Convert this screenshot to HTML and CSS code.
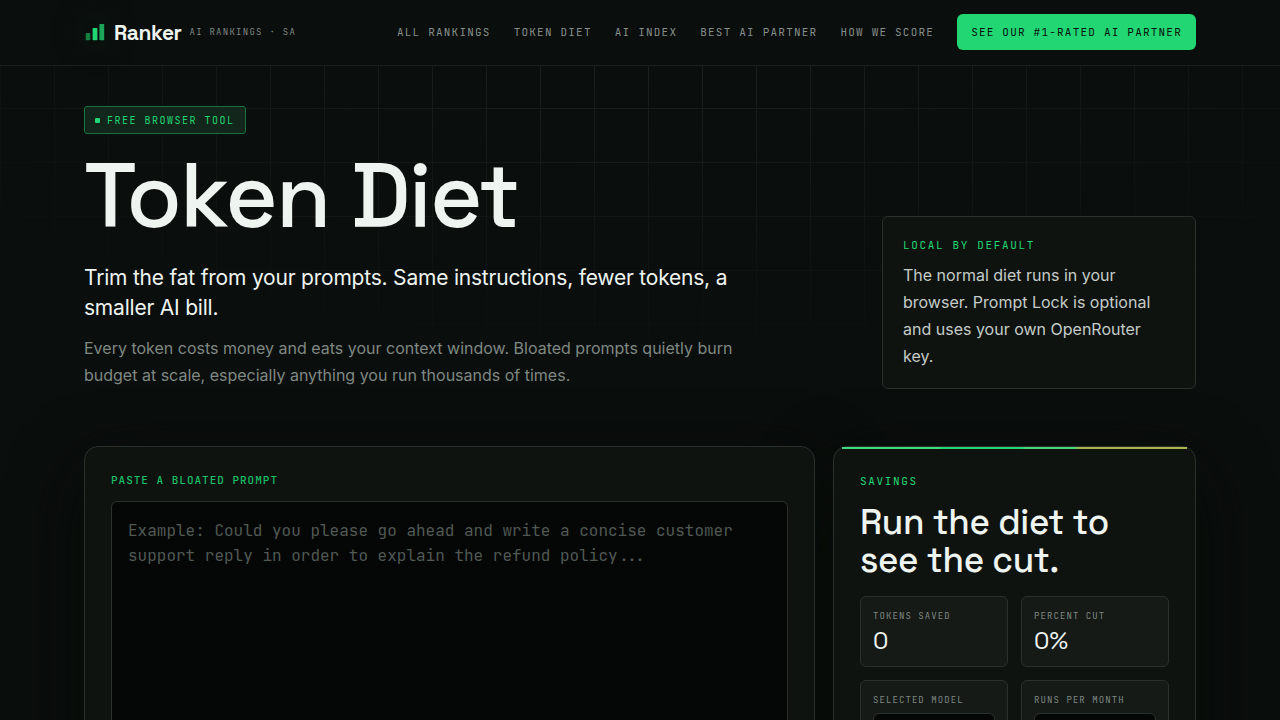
FILE: index.html
```html
<!DOCTYPE html>
<html lang="en">
<head>
    <meta charset="UTF-8">
    <meta name="viewport" content="width=device-width, initial-scale=1.0">
    <title>Token Diet | Ranker</title>
    <link rel="stylesheet" href="styles.css">
</head>
<body>
    <header class="site-header">
        <div class="wrap header-inner">
            <a class="brand" href="#">
                <svg class="brand-mark" width="22" height="22" viewBox="0 0 22 22" aria-hidden="true">
                    <rect x="1.7" y="12" width="4.6" height="7.3" rx="0.8" fill="#15803f"/>
                    <rect x="8.6" y="7" width="4.8" height="12.3" rx="0.8" fill="#22d673"/>
                    <rect x="15.4" y="3" width="4.8" height="16.3" rx="0.8" fill="#1ba65a"/>
                </svg>
                <span class="brand-name">Ranker</span>
                <span class="brand-sub">AI RANKINGS · SA</span>
            </a>
            <nav class="nav">
                <a href="#">ALL RANKINGS</a>
                <a href="#">TOKEN DIET</a>
                <a href="#">AI INDEX</a>
                <a href="#">BEST AI PARTNER</a>
                <a href="#">HOW WE SCORE</a>
                <a class="nav-cta" href="#">SEE OUR #1-RATED AI PARTNER</a>
            </nav>
        </div>
    </header>

    <main class="wrap">
        <section class="hero">
            <div class="hero-copy">
                <span class="badge">FREE BROWSER TOOL</span>
                <h1>Token Diet</h1>
                <p class="lead">Trim the fat from your prompts. Same instructions, fewer tokens, a smaller AI bill.</p>
                <p class="sub">Every token costs money and eats your context window. Bloated prompts quietly burn budget at scale, especially anything you run thousands of times.</p>
            </div>
            <aside class="note">
                <span class="eyebrow">LOCAL BY DEFAULT</span>
                <p>The normal diet runs in your browser. Prompt Lock is optional and uses your own OpenRouter key.</p>
            </aside>
        </section>

        <section class="tool">
            <div class="panel">
                <label class="prompt-label" for="prompt">PASTE A BLOATED PROMPT</label>
                <textarea id="prompt" class="prompt" placeholder="Example: Could you please go ahead and write a concise customer support reply in order to explain the refund policy..."></textarea>
            </div>
            <div class="panel savings">
                <span class="eyebrow">SAVINGS</span>
                <h2>Run the diet to see the cut.</h2>
                <div class="stats">
                    <div class="stat">
                        <span class="stat-label">TOKENS SAVED</span>
                        <span class="stat-value">0</span>
                    </div>
                    <div class="stat">
                        <span class="stat-label">PERCENT CUT</span>
                        <span class="stat-value">0%</span>
                    </div>
                    <div class="stat">
                        <label class="stat-label" for="model">SELECTED MODEL</label>
                        <select id="model" class="field"></select>
                    </div>
                    <div class="stat">
                        <label class="stat-label" for="runs">RUNS PER MONTH</label>
                        <input id="runs" class="field" type="number">
                    </div>
                </div>
            </div>
        </section>
    </main>
</body>
</html>
```

FILE: styles.css
```css
:root {
    --bg: #0a0e0d;
    --panel: #0e1310;
    --card: #151a17;
    --line: #2a312d;
    --text: #eef4f0;
    --muted: #7f8882;
    --green: #22d673;
    --display: "Space Grotesk", Inter, sans-serif;
    --sans: Inter, "Liberation Sans", sans-serif;
    --mono: "JetBrains Mono", "DejaVu Sans Mono", monospace;
}
* {
    box-sizing: border-box;
}
body {
    margin: 0;
    position: relative;
    background: var(--bg);
    color: var(--text);
    font-family: var(--sans);
}
/* faint grid that fades out down the page */
body::before {
    content: "";
    position: absolute;
    inset: 0 0 auto;
    height: 380px;
    z-index: -1;
    background-image:
        linear-gradient(#1a201d 1px, transparent 1px),
        linear-gradient(90deg, #1a201d 1px, transparent 1px);
    background-size: 54px 54px;
    mask-image: radial-gradient(ellipse 70% 100% at 50% 0, #000 20%, transparent 100%);
}
h1, h2, p {
    margin: 0;
}
a {
    color: inherit;
    text-decoration: none;
}
.wrap {
    max-width: 1160px;
    margin: 0 auto;
    padding: 0 24px;
}

/* header */
.site-header {
    padding-bottom: 1px;
    background: #0a0e0d;
    border-bottom: 1px solid #1b221e;
}
.header-inner {
    display: flex;
    align-items: center;
    justify-content: space-between;
    height: 64px;
}
.brand {
    display: flex;
    align-items: center;
    gap: 8px;
}
.brand-mark {
    box-shadow: 0 0 24px 4px #0c1711;
    border-radius: 50%;
    overflow: visible;
}
.brand-name {
    font-family: var(--display);
    font-size: 21px;
    font-weight: 600;
    letter-spacing: -0.02em;
}
.brand-sub {
    font-family: var(--mono);
    font-size: 9px;
    letter-spacing: 0.14em;
    color: var(--muted);
}
.nav {
    display: flex;
    align-items: center;
    gap: 23px;
    font-family: var(--mono);
    font-size: 11px;
    letter-spacing: 0.11em;
    color: #858d88;
    white-space: nowrap;
}
.nav-cta {
    padding: 0 14px;
    line-height: 36px;
    border-radius: 6px;
    background: var(--green);
    color: #06120b;
}

/* hero */
.hero {
    display: flex;
    align-items: flex-end;
    justify-content: space-between;
    gap: 40px;
    padding: 40px 0 57px;
}
.hero-copy {
    max-width: 690px;
}
.badge {
    display: inline-flex;
    align-items: center;
    gap: 7px;
    height: 28px;
    padding: 0 10px;
    border: 1px solid #17733f;
    border-radius: 3px;
    background: #12261b;
    font-family: var(--mono);
    font-size: 10px;
    letter-spacing: 0.15em;
    color: var(--green);
}
.badge::before {
    content: "";
    width: 5px;
    height: 5px;
    border-radius: 1px;
    background: var(--green);
}
h1 {
    margin: 19px 0 24px;
    font-family: var(--display);
    font-size: 90px;
    font-weight: 500;
    line-height: 86px;
    letter-spacing: -0.02em;
}
.lead {
    font-size: 21px;
    line-height: 30px;
    letter-spacing: -0.01em;
}
.sub {
    margin-top: 12px;
    font-size: 16px;
    line-height: 27px;
    color: var(--muted);
}
.note {
    flex: 0 0 314px;
    padding: 20px 20px 18px;
    border: 1px solid var(--line);
    border-radius: 6px;
    background: var(--panel);
}
.note p {
    margin-top: 9px;
    font-size: 16px;
    line-height: 27px;
    color: #c5ccc8;
}
.eyebrow {
    display: block;
    font-family: var(--mono);
    font-size: 11px;
    line-height: 16px;
    letter-spacing: 0.15em;
    color: var(--green);
}

/* tool */
.tool {
    display: grid;
    grid-template-columns: minmax(0, 1fr) 363px;
    gap: 18px;
}
.panel {
    position: relative;
    padding: 26px;
    border: 1px solid var(--line);
    border-radius: 14px;
    background: var(--panel);
}
/* one shadow behind both panels, so neither darkens the other */
.tool .panel::after {
    content: "";
    position: absolute;
    inset: 0;
    z-index: -1;
    border-radius: 14px;
    box-shadow: 0 24px 70px #060b07;
}
.prompt-label {
    display: block;
    margin-bottom: 14px;
    font-family: var(--mono);
    font-size: 11px;
    font-weight: 500;
    line-height: 14px;
    letter-spacing: 0.09em;
    color: #1dbf66;
}
.prompt {
    display: block;
    width: 100%;
    min-height: 340px;
    padding: 16px;
    border: 1px solid var(--line);
    border-radius: 6px;
    background: #050706;
    color: var(--text);
    font-family: var(--mono);
    font-size: 16px;
    line-height: 25px;
    resize: none;
}
.prompt::placeholder {
    color: #505954;
}
.savings::before {
    content: "";
    position: absolute;
    inset: 0 8px auto;
    height: 2px;
    background: linear-gradient(90deg, #3fdc7c 28%, #22d673 29%, #22d673 52%, #46d878 53%, #46d878 67%, #adb44c 69%);
}
h2 {
    margin: 14px 0 17px;
    font-family: var(--display);
    font-size: 35px;
    font-weight: 500;
    line-height: 38px;
    letter-spacing: -0.01em;
}
.stats {
    display: grid;
    grid-template-columns: 1fr 1fr;
    gap: 13px;
}
.stat {
    min-height: 71px;
    padding: 12px;
    border: 1px solid var(--line);
    border-radius: 6px;
    background: var(--card);
}
.stat-label {
    display: block;
    font-family: var(--mono);
    font-size: 9px;
    line-height: 14px;
    letter-spacing: 0.12em;
    color: var(--muted);
}
.stat-value {
    display: block;
    margin-top: 4px;
    font-family: var(--display);
    font-size: 24px;
    line-height: 27px;
}
.field {
    width: 100%;
    height: 40px;
    margin-top: 6px;
    padding: 0 10px;
    border: 1px solid var(--line);
    border-radius: 6px;
    background: #050706;
    color: var(--text);
    font-family: var(--mono);
    font-size: 14px;
    appearance: none;
}
```
